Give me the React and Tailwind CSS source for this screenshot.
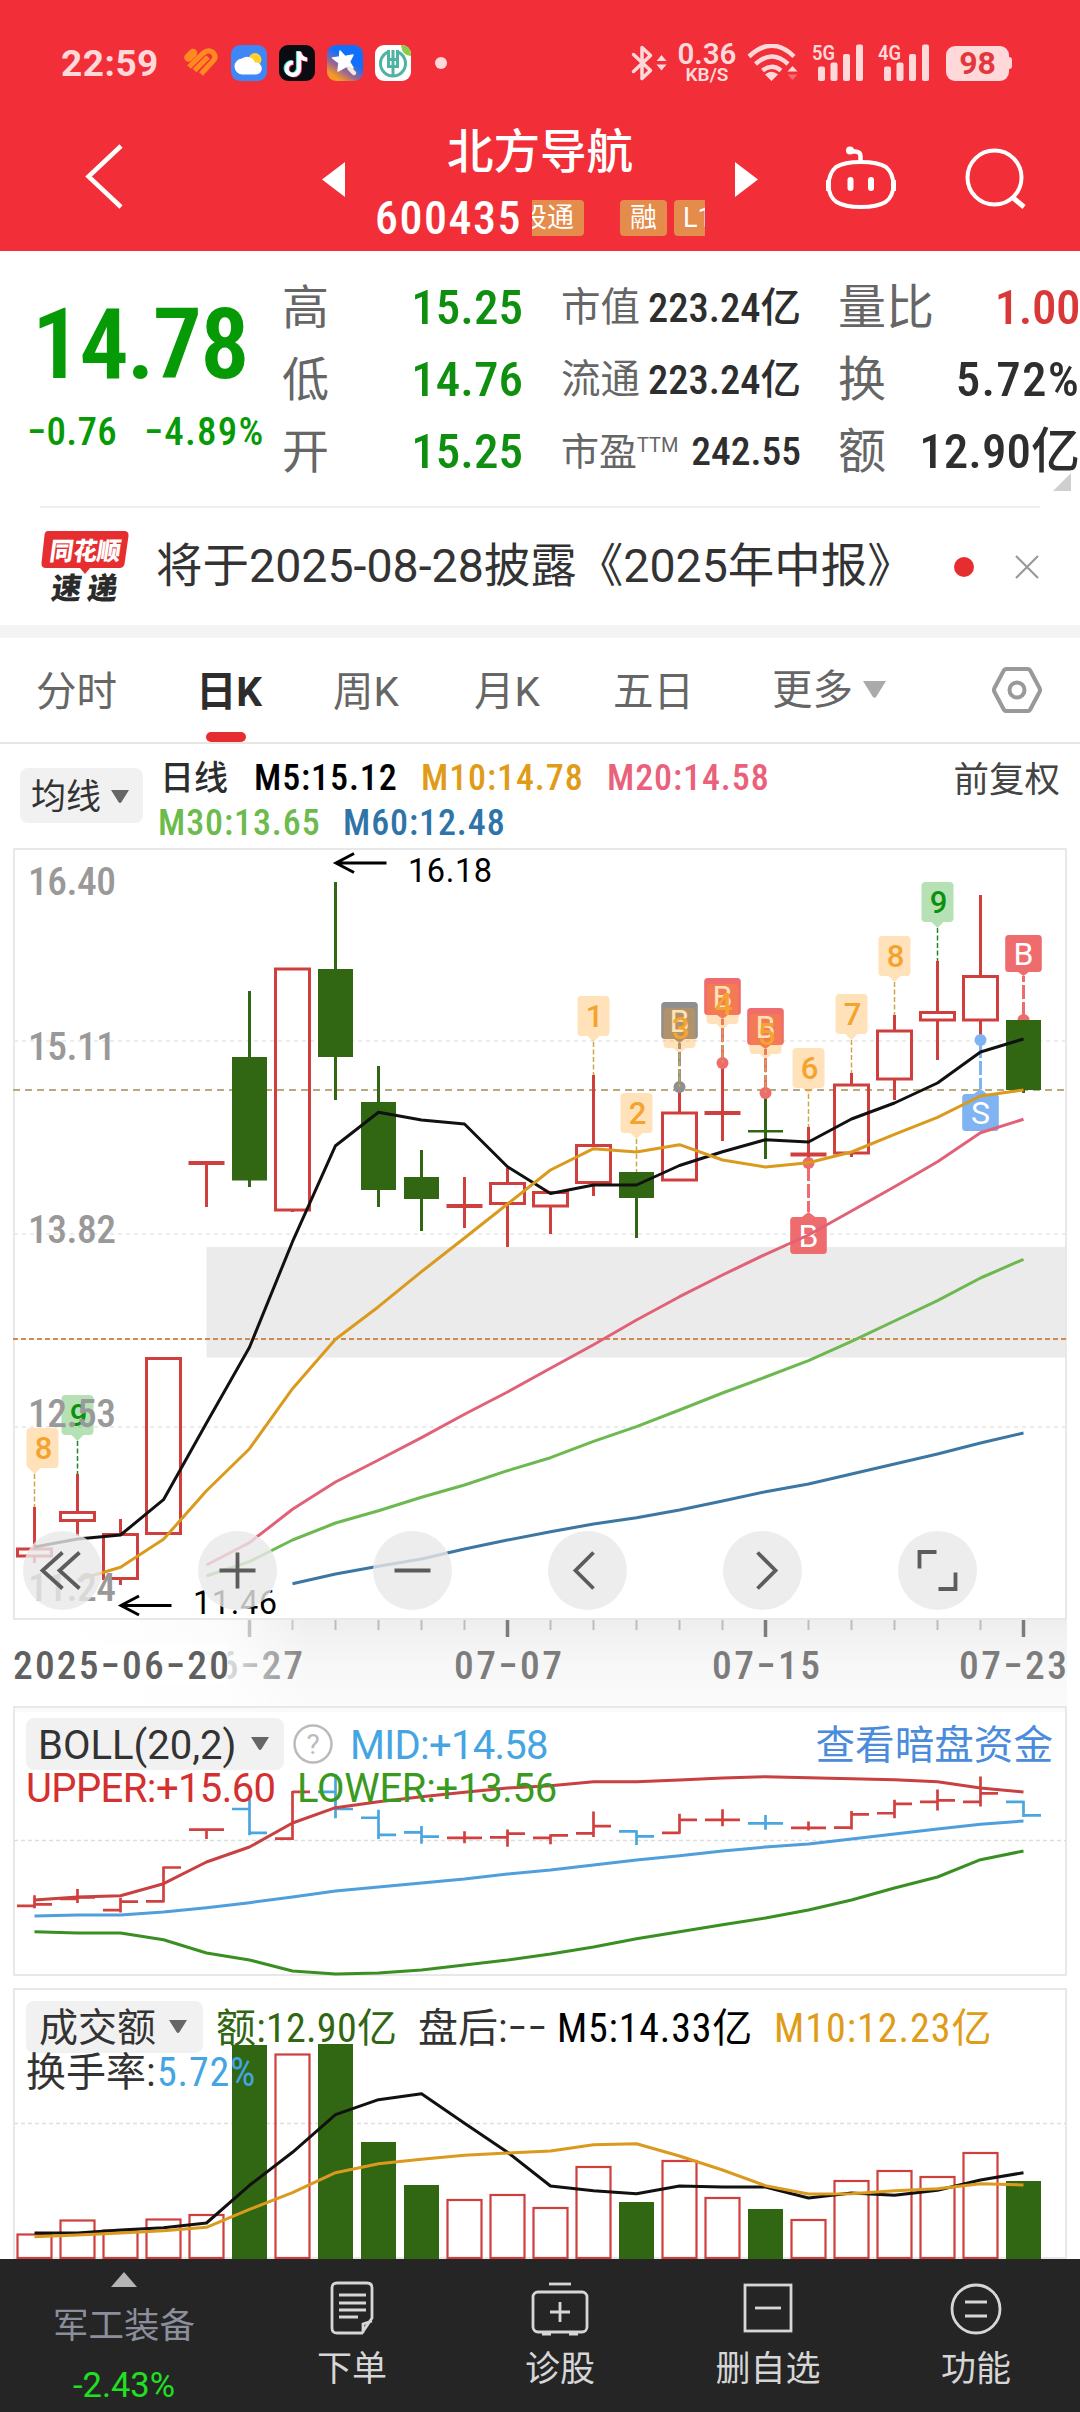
import React from 'react';

// x of the first candle and the distance between two candles
const X0 = 34.5;
const STEP = 43;
const RED = '#cf3f3e';
const GREEN = '#316613';
const xAt = (i) => X0 + i * STEP;

// [up, high, bodyTop, bodyBottom, low]
const candles = [
  [1, 1507, 1549, 1556, 1563],
  [1, 1474, 1512.5, 1520.5, 1536],
  [1, 1519, 1534.5, 1578.5, 1585],
  [1, 1358.5, 1358.5, 1533.5, 1533.5],
  [1, 1163, 1163, 1163, 1207],
  [0, 991, 1057, 1180.5, 1187],
  [1, 969, 969, 1210, 1212],
  [0, 882, 969, 1057, 1100],
  [0, 1066, 1102, 1190, 1207],
  [0, 1150, 1177, 1199, 1231],
  [1, 1177, 1206, 1206, 1228],
  [1, 1168, 1183.5, 1203.5, 1247],
  [1, 1192.5, 1192.5, 1206, 1234],
  [1, 1075, 1145.5, 1182.5, 1196],
  [0, 1172, 1172, 1198, 1238],
  [1, 1087, 1113, 1180, 1180],
  [1, 1063, 1113, 1113, 1141],
  [0, 1093, 1131, 1131, 1159],
  [1, 1127, 1154.5, 1154.5, 1163],
  [1, 1073, 1085, 1153, 1157],
  [1, 1015, 1031, 1079, 1100],
  [1, 961, 1012.5, 1020, 1060],
  [1, 895, 976.5, 1020, 1039],
  [0, 1020, 1020, 1090, 1093],
];

const MA = [
  { color: '#e16277', from: 4, ys: [1565, 1542.7, 1509.3, 1482, 1460, 1437.7, 1414.3, 1392, 1368.3, 1344.7, 1320, 1296.7, 1275, 1254.3, 1235, 1211, 1186.7, 1161.7, 1132.7, 1119.3] },
  { color: '#6db850', from: 4, ys: [1576, 1561.7, 1540, 1523, 1510.7, 1497.3, 1485, 1470.7, 1457.7, 1441.3, 1426.7, 1410, 1393, 1377, 1360.7, 1341.3, 1321, 1300.7, 1278, 1259.3] },
  { color: '#3c76a3', from: 6, ys: [1583.7, 1574, 1566.3, 1559, 1549, 1540, 1531.7, 1524, 1517.7, 1510, 1501, 1491.7, 1484, 1474, 1464, 1454, 1443, 1433] },
  { color: '#111111', from: 0, ys: [1547, 1539, 1535, 1499.7, 1423, 1347.3, 1241.7, 1145.7, 1112.3, 1120, 1124, 1166.7, 1193.5, 1185, 1185, 1165.5, 1151.7, 1139.7, 1142, 1119, 1103, 1083, 1052, 1039] },
  { color: '#da9a1d', from: 1, ys: [1580, 1567.3, 1539.3, 1490.7, 1448.7, 1388.7, 1339.3, 1306.7, 1271.7, 1238, 1204, 1170, 1148.7, 1152, 1144.7, 1160, 1167, 1162.7, 1152, 1134.3, 1117.3, 1096, 1090] },
];

const boll = [
  { color: '#c8403f', ys: [1900, 1897, 1895.7, 1883.7, 1862, 1847, 1823, 1807.7, 1801.7, 1796.7, 1792.3, 1788, 1785.7, 1781.7, 1781.7, 1780, 1778, 1776.7, 1777.7, 1778.7, 1779.7, 1781.7, 1788, 1792] },
  { color: '#4f9fdc', ys: [1916, 1915, 1915, 1912, 1907.7, 1902.7, 1897, 1891, 1887, 1883, 1879, 1874, 1870, 1865, 1860, 1855.7, 1851, 1847, 1844, 1839, 1834, 1829, 1824.3, 1821] },
  { color: '#3a8f22', ys: [1931.7, 1933, 1933, 1939.7, 1953, 1960, 1971, 1974, 1973, 1970, 1965, 1960, 1954, 1947, 1938.7, 1931.7, 1924.7, 1918, 1910, 1900, 1888, 1877, 1859.7, 1851] },
];

const volume = [
  [1, 2234], [1, 2220], [1, 2230], [1, 2219], [1, 2214.5], [0, 2045], [1, 2054], [0, 2044],
  [0, 2142], [0, 2185], [1, 2199.5], [1, 2194.5], [1, 2207.5], [1, 2166.5], [0, 2202], [1, 2160.5],
  [1, 2197.5], [0, 2209], [1, 2219.5], [1, 2180.5], [1, 2170.5], [1, 2176.5], [1, 2152.5], [0, 2181],
];

const volMA = [
  { color: '#111111', ys: [2233, 2233, 2230, 2227.7, 2223, 2185.3, 2152.3, 2114.7, 2099.7, 2093.7, 2123.3, 2152.3, 2186, 2190.7, 2193.7, 2186, 2187, 2187, 2198, 2193, 2195.3, 2190.3, 2180, 2172.7] },
  { color: '#da9a1d', ys: [2236.7, 2235, 2233, 2230.7, 2227.3, 2209.3, 2192.7, 2172.7, 2163.7, 2159.3, 2155.3, 2153, 2151, 2144.7, 2143.7, 2156, 2170, 2185.7, 2194, 2193.7, 2190.7, 2188.7, 2183.7, 2185] },
];

const pins = [
  [0, '8'], [1, '9'], [13, '1'], [14, '2'], [15, '3'], [16, '4'], [17, '5'], [18, '6'], [19, '7'], [20, '8'], [21, '9'],
];

function Line({ color, ys, from = 0 }) {
  return (
    <polyline
      points={ys.map((y, k) => `${xAt(from + k)},${y}`).join(' ')}
      fill="none"
      stroke={color}
      strokeWidth="3"
      strokeLinejoin="round"
    />
  );
}

function Candle({ i, d }) {
  const [up, high, top, bottom, low] = d;
  const x = xAt(i);
  if (!up) {
    return (
      <g fill={GREEN}>
        <rect x={x - 1.5} y={high} width="3" height={low - high} />
        <rect x={x - 17.5} y={top === bottom ? top - 1 : top} width="35" height={Math.max(bottom - top, 2.5)} />
      </g>
    );
  }
  if (top === bottom) {
    return (
      <g fill={RED}>
        <rect x={x - 1.5} y={high} width="3" height={low - high} />
        <rect x={x - 18} y={top - 2} width="36" height="4" />
      </g>
    );
  }
  return (
    <g stroke={RED} strokeWidth="3" fill="none">
      <path d={`M${x} ${high}V${top}M${x} ${bottom}V${low}`} />
      <rect x={x - 17} y={top} width="34" height={bottom - top} />
    </g>
  );
}

// numbered marker that hangs above a candle; the first one is pushed back inside the frame
function Pin({ i, label }) {
  const x = xAt(i);
  const bx = i === 0 ? x + 8 : x;
  const y = candles[i][1] - 79;
  const green = label === '9';
  return (
    <g>
      <path
        d={`M${bx - 12} ${y}h24q4 0 4 4v32q0 4 -4 4H${x + 6}l-6 6l-6 -6H${bx - 12}q-4 0 -4 -4v-32q0 -4 4 -4z`}
        fill={green ? '#0a9a0a' : '#ff9c1c'}
        opacity="0.3"
      />
      <path d={`M${x} ${y + 46}v33`} stroke={green ? '#1d8a1d' : '#c9a74a'} strokeWidth="1.5" strokeDasharray="5 2.5" />
      <text x={bx + 1} y={y + 31} textAnchor="middle" fontSize="31" fontWeight="500" fill={green ? '#0c910c' : '#f3a32e'}>{label}</text>
    </g>
  );
}

// buy / sell flag, dot sits on the candle end
function Flag({ i, label, color, down, y }) {
  const x = xAt(i);
  const s = down ? 1 : -1;
  const tip = down ? y + 49 : y - 44;
  const top = down ? tip + 5 : tip - 41;
  return (
    <g>
      <circle cx={x} cy={y} r="6" fill={color} />
      <path d={`M${x} ${y + s * 4}V${tip}`} stroke={color} strokeWidth="3" strokeDasharray="14 3" />
      <path d={`M${x - 8} ${tip + s * 6}L${x} ${tip}L${x + 8} ${tip + s * 6}z`} fill={color} />
      <rect x={x - 18.3} y={top} width="36.6" height="37" rx="3.5" fill={color} />
      <text x={x} y={top + 30} textAnchor="middle" fontSize="32" fill="#fff">{label}</text>
    </g>
  );
}

function PriceChart() {
  return (
    <svg width="1080" height="862" viewBox="0 844 1080 862" className="block font-['Roboto']">
      <defs>
        <linearGradient id="axis" x1="0" y1="0" x2="0" y2="1">
          <stop offset="0" stopColor="#eeeeee" />
          <stop offset="0.5" stopColor="#f7f7f7" />
          <stop offset="1" stopColor="#fbfbfb" />
        </linearGradient>
        <linearGradient id="fade" x1="0" y1="0" x2="1" y2="0">
          <stop offset="0" stopColor="#fff" />
          <stop offset="0.35" stopColor="#fff" stopOpacity="0.95" />
          <stop offset="0.72" stopColor="#fff" stopOpacity="0.75" />
          <stop offset="1" stopColor="#fff" stopOpacity="0" />
        </linearGradient>
      </defs>
      <rect x="13" y="1619" width="1054" height="87" fill="url(#axis)" />
      <rect x="206.5" y="1247" width="860" height="110.5" fill="#ebebeb" />
      <rect x="14" y="849" width="1052" height="770" fill="none" stroke="#e8e8e8" strokeWidth="2" />
      <path d="M14 1041H1066M14 1234H1066M14 1427H1066" stroke="#e6e6e6" strokeWidth="1.5" strokeDasharray="4 4" />
      <path d="M13 1090H1066" stroke="#b9aa7f" strokeWidth="2" strokeDasharray="7 5" />
      <path d="M13 1339H1066" stroke="#d08a50" strokeWidth="2" strokeDasharray="5 3" />

      <g fontSize="39.5" fontWeight="500" fill="#999" className="font-['Roboto_Condensed']">
        <text x="28" y="895" textLength="88">16.40</text>
        <text x="28" y="1060" textLength="88">15.11</text>
        <text x="28" y="1243" textLength="88">13.82</text>
      </g>

      {candles.map((d, i) => <Candle key={i} i={i} d={d} />)}

      <Flag i={15} label="B" color="#8f8f8f" y={1087} />
      <Flag i={16} label="B" color="#ee6c6e" y={1063} />
      <Flag i={17} label="B" color="#ee6c6e" y={1093} />
      <Flag i={18} label="B" color="#ee6c6e" y={1163} down />
      <Flag i={22} label="S" color="#7fb3f2" y={1040} down />
      <Flag i={23} label="B" color="#ee6c6e" y={1020} />
      {pins.map(([i, label]) => <Pin key={i} i={i} label={label} />)}
      <rect x={xAt(23) - 17.5} y="1020" width="35" height="70" fill={GREEN} />

      {MA.map((m) => <Line key={m.color} {...m} />)}

      <g fontSize="39.5" fontWeight="500" fill="#999" className="font-['Roboto_Condensed']">
        <text x="28" y="1427" textLength="88">12.53</text>
        <text x="28" y="1601" textLength="88">11.24</text>
      </g>

      <g stroke="#000" strokeWidth="3" fill="none">
        <path d="M386.5 863H336M354 853.5L336 863L354 872.5" />
        <path d="M171.5 1605.5H121M139 1596L121 1605.5L139 1615" />
      </g>
      <g fontSize="32.5" fill="#000">
        <text x="408" y="882" textLength="84">16.18</text>
        <text x="193" y="1613.5" textLength="84">11.46</text>
      </g>

      {/* date axis */}
      {candles.map((_, i) => {
        if (i < 5) return null;
        const major = (i - 5) % 6 === 0;
        return (
          <path
            key={i}
            d={`M${xAt(i)} 1620V${major ? 1637 : 1630}`}
            stroke={major ? '#7c7c7c' : '#bdbdbd'}
            strokeWidth={major ? 3.5 : 2}
          />
        );
      })}
      <g fontSize="39.5" fontWeight="500" fill="#7c7c7c" className="font-['Roboto_Condensed']">
        <text x="197" y="1679" textLength="106">06−27</text>
        <text x="454" y="1679" textLength="108">07−07</text>
        <text x="712" y="1679" textLength="108">07−15</text>
        <text x="959" y="1679" textLength="108">07−23</text>
      </g>
      <rect x="13" y="1620" width="297" height="86" fill="url(#fade)" />
      <rect x="13" y="1645" width="215" height="40" fill="#fff" opacity="0.7" />
      <text x="13" y="1679" fontSize="39.5" fontWeight="500" fill="#606060" textLength="216" className="font-['Roboto_Condensed']">2025−06−20</text>
    </svg>
  );
}

const toolButtons = [
  'M17 -18L-3 0L17 18M0 -18L-20 0L0 18',
  'M-18 0H18M0 -18V18',
  'M-18 0H18',
  'M6 -18L-12 0L6 18',
  'M-5 -18L13 0L-5 18',
  'M-18 -2V-18.5H-1M18 2V18.5H1',
];

const bollY = (y) => 1809 + (y - 1057) * 0.194;

function BollChart() {
  return (
    <svg width="1080" height="278" viewBox="0 1706 1080 278" className="block">
      <rect x="14" y="1706" width="1052" height="6" fill="#fafafa" />
      <rect x="14" y="1707" width="1052" height="268" fill="none" stroke="#e8e8e8" strokeWidth="2" />
      <path d="M14 1840.5H1066" stroke="#ddd" strokeWidth="1.5" strokeDasharray="4 3" />
      {candles.map(([up, high, top, bottom, low], i) => {
        const x = xAt(i);
        const open = bollY(up ? bottom : top);
        const close = bollY(up ? top : bottom);
        return (
          <path
            key={i}
            d={`M${x} ${bollY(high) - 1}V${bollY(low) + 1}M${x - 17.5} ${open}H${x}M${x} ${close}H${x + 17.5}`}
            stroke={up ? '#d0403f' : '#4aa6de'}
            strokeWidth="2.7"
          />
        );
      })}
      {boll.map((b) => <Line key={b.color} {...b} />)}
    </svg>
  );
}

function VolumeChart() {
  return (
    <svg width="1080" height="275" viewBox="0 1984 1080 275" className="block">
      <path d="M14 2262V1989H1066V2262M14 2258H1066" fill="none" stroke="#e8e8e8" strokeWidth="2" />
      <path d="M14 2123.5H1066" stroke="#ddd" strokeWidth="1.5" strokeDasharray="4 3" />
      {volume.map(([up, y], i) =>
        up ? (
          <rect key={i} x={xAt(i) - 17} y={y + 0.5} width="34" height={2257.5 - y} fill="none" stroke={RED} strokeWidth="2.2" />
        ) : (
          <rect key={i} x={xAt(i) - 17.5} y={y} width="35" height={2259 - y} fill={GREEN} />
        )
      )}
      {volMA.map((m) => <Line key={m.color} {...m} />)}
    </svg>
  );
}

function Caret({ className }) {
  return (
    <svg width="18" height="14" viewBox="0 0 18 14" className={className}>
      <path d="M0 0h18l-7.5 12q-1.5 2 -3 0z" fill="currentColor" />
    </svg>
  );
}

function Signal({ label }) {
  return (
    <svg width="52" height="38" viewBox="0 0 52 38" fill="#ffd9da" className="overflow-visible">
      <text x="0" y="15.5" fontSize="21" fontWeight="600" textLength="23" lengthAdjust="spacingAndGlyphs">{label}</text>
      <rect x="6" y="22.5" width="7" height="14.5" rx="2" />
      <rect x="18.5" y="18.5" width="7" height="18.5" rx="2" />
      <rect x="31" y="10" width="7" height="27" rx="2" />
      <rect x="44" y="0.5" width="7" height="36.5" rx="2" />
    </svg>
  );
}

function StatusBar() {
  return (
    <div className="flex h-[126px] items-center pl-[61px] text-[#ffd9da]">
      <div className="w-[123px] text-[37px] font-bold leading-none tracking-[0.5px]">22:59</div>
      <svg width="34" height="30" viewBox="0 0 34 30" className="mr-[13px]" fill="none" stroke="#ff8a1f" strokeWidth="5.2">
        <path d="M4.500 9.500L9 5" strokeWidth="8.500" strokeLinecap="round" />
        <path d="M5 19L19.500 5Q24 1 29 4.500Q33 9 29 13L17 26M10.500 22.500L24 9" />
      </svg>
      <svg width="36" height="36" viewBox="0 0 36 36" className="mr-3">
        <rect width="36" height="36" rx="9" fill="#3f86f7" />
        <circle cx="24" cy="14.5" r="6.5" fill="#ffd02e" />
        <path d="M12 29.5a8 8 0 0 1 -1 -16a8.5 8.5 0 0 1 13 4a6 6 0 0 1 1.5 12z" fill="#fff" />
      </svg>
      <svg width="36" height="36" viewBox="0 0 36 36" className="mr-3" fill="none" strokeWidth="4.2">
        <rect width="36" height="36" rx="9" fill="#0b0b12" />
        <path d="M19 6v17a6.2 6.2 0 1 1 -6 -6M19 7q1.5 6.5 8 7" stroke="#27e5e0" />
        <path d="M21 7v17a6.2 6.2 0 1 1 -6 -6M21 8q1.5 6.5 8 7" stroke="#f6305a" />
        <path d="M20 6.5v17a6.2 6.2 0 1 1 -6 -6M20 7.5q1.5 6.5 8 7" stroke="#fff" />
      </svg>
      <svg width="36" height="36" viewBox="0 0 36 36" className="mr-3">
        <defs>
          <linearGradient id="star" x1="0.8" y1="0.1" x2="0.2" y2="1">
            <stop offset="0.35" stopColor="#1170fb" />
            <stop offset="0.65" stopColor="#a0658f" />
            <stop offset="0.9" stopColor="#f59b23" />
          </linearGradient>
        </defs>
        <rect width="36" height="36" rx="9" fill="url(#star)" />
        <path d="M13 6l5 5.5l8 -1.5l-3.500 7l3.500 6l-7 -1.500l-8 4.500l1 -8l-6.500 -5l7 -1z" fill="#fff" stroke="#fff" strokeWidth="1.5" strokeLinejoin="round" />
        <path d="M22.5 23.5l4.5 4.5" stroke="#f4ead9" strokeWidth="4.5" strokeLinecap="round" />
      </svg>
      <svg width="36" height="36" viewBox="0 0 36 36" className="mr-6">
        <rect width="36" height="36" rx="9" fill="#fff" />
        <path d="M26 0h1a9 9 0 0 1 9 9v2q-9 0 -10 -11z" fill="#8ccb45" />
        <circle cx="18" cy="18.5" r="12.5" fill="none" stroke="#4fb3a4" strokeWidth="3" />
        <path d="M18 3v9" stroke="#fff" strokeWidth="7" />
        <path d="M13.5 5v16.5h9V5M18 5v26M13.5 14.5h9" fill="none" stroke="#4fb3a4" strokeWidth="3" />
      </svg>
      <div className="size-3 rounded-full bg-[#ffd9da]" />

      <svg width="37" height="38" viewBox="0 0 37 38" className="ml-[184px] mr-[9px]">
        <path d="M2.5 10.5L19.5 26.5L11 34.5V3.5L19.5 11.5L2.5 27.5" fill="none" stroke="#ffd9da" strokeWidth="3.5" strokeLinejoin="round" strokeLinecap="round" />
        <path d="M25.5 17l5 -6l5 6zM25.5 20.5h10l-5 6z" fill="#ffd9da" />
      </svg>
      <div className="flex w-[60px] flex-col items-center leading-none">
        <span className="text-[29.5px] font-semibold leading-[22px]">0.36</span>
        <span className="text-[19px] font-semibold leading-[19px]">KB/S</span>
      </div>
      <svg width="51" height="38" viewBox="0 0 51 38" className="ml-[10px] mr-[14px]">
        <path d="M2 12.5Q25 -9 47 12.5M8.5 20Q25 5 41 20M15.5 26.5Q25 19 34 26.5" fill="none" stroke="#ffd9da" strokeWidth="4.5" />
        <path d="M24.5 37l-6.5 -6.5q6.5 -5.5 13 0z" fill="#ffd9da" />
        <path d="M40.5 27.5l5 -5.5l5 5.5z" fill="#ffd9da" />
        <path d="M40.5 30.5h10l-5 5.5z" fill="#f66a6f" />
      </svg>
      <Signal label="5G" />
      <div className="w-[14px]" />
      <Signal label="4G" />
      <div className="ml-[16px] flex items-center">
        <div className="flex h-[35px] w-[63px] items-center justify-center rounded-[9px] bg-[#ffd9da] text-[32px] font-bold leading-none text-[#e2373c]">98</div>
        <div className="h-3 w-[3px] rounded-r-sm bg-[#ffd9da]" />
      </div>
    </div>
  );
}

function TitleBar() {
  return (
    <div className="flex h-[125px] text-white">
      <svg width="322" height="125" viewBox="0 0 322 125" fill="none">
        <path d="M121 20L88.500 50.500L121 81" stroke="#fff" strokeWidth="4.5" />
      </svg>
      <svg width="23" height="125" viewBox="0 0 23 125"><path d="M0 53.5L23 36V71z" fill="#fff" /></svg>
      <div className="flex w-[390px] flex-col items-center">
        <div className="h-[60px] pt-[3px] text-[46.5px] font-medium leading-[46px]">北方导航</div>
        <div className="flex h-[58px] w-[330px] items-center pt-[5px]">
          <span className="w-[157px] font-['Roboto_Condensed'] text-[46px] font-medium leading-none tracking-[1.5px]">600435</span>
          <div className="flex w-[173px] items-center overflow-hidden whitespace-nowrap text-[27px] leading-9">
            <span className="-ml-3 h-9 w-[64px] shrink-0 rounded bg-[#e38c4b]">股通</span>
            <span className="ml-9 h-9 w-[47px] shrink-0 rounded bg-[#e38c4b] text-center">融</span>
            <span className="ml-[7px] h-9 w-[47px] shrink-0 rounded bg-[#e38c4b] pl-[9px]">L1</span>
          </div>
        </div>
      </div>
      <svg width="23" height="125" viewBox="0 0 23 125"><path d="M23 53.5L0 36V71z" fill="#fff" /></svg>
      <svg width="322" height="125" viewBox="758 126 322 125" fill="none" stroke="#fff" strokeWidth="4">
        <path d="M861 162q17 0 25 5q7 6 7.5 18q-0.5 12 -8 17q-8 5 -24.5 5t-24.5 -5q-7.5 -5 -8 -17q0.5 -12 7.5 -18q8 -5 25 -5z" />
        <path d="M828.5 180v11M893.5 180v11" strokeWidth="5" />
        <path d="M860.5 162V156q0 -4 -5 -4.5h-4" strokeWidth="4.5" />
        <circle cx="850" cy="150.5" r="4" fill="#fff" stroke="none" />
        <path d="M850.5 180v8M871 180v8" strokeWidth="6" strokeLinecap="round" />
        <circle cx="994.5" cy="177.5" r="27" />
        <path d="M1012 197L1024 207" strokeWidth="5" />
      </svg>
    </div>
  );
}

function Cell({ label, sup, value, labelClass, valueClass }) {
  return (
    <div className="flex h-[72px] items-center justify-between">
      <span className={`text-[#666] ${labelClass}`}>
        {label}
        {sup && <sup className="relative top-[-13px] align-baseline text-[20px] leading-none">{sup}</sup>}
      </span>
      <span className={`whitespace-nowrap font-medium font-['Roboto_Condensed','Noto_Sans_CJK_SC',sans-serif] ${valueClass}`}>{value}</span>
    </div>
  );
}

function Quote() {
  return (
    <div className="relative flex h-[255px] pt-[21px] text-[#2e2e2e]">
      <div className="w-[282px] font-['Roboto_Condensed'] font-medium text-[#079a07]">
        <div className="mt-[24px] h-[111px] pl-[32px] text-[98px] font-semibold leading-[98px] tracking-[-1.9px]">14.78</div>
        <div className="flex pl-[27px] text-[39px] leading-[50px] tracking-[0.3px]">
          <span className="w-[117px]">−0.76</span>
          <span className="tracking-[1.2px]">−4.89%</span>
        </div>
      </div>
      <div className="w-[241px]">
        {[['高', '15.25'], ['低', '14.76'], ['开', '15.25']].map(([label, value]) => (
          <Cell key={label} label={label} value={value} labelClass="text-[47px]" valueClass="text-[49px] text-[#0f8f0f]" />
        ))}
      </div>
      <div className="ml-[38px] w-[240px]">
        <Cell label="市值" value="223.24亿" labelClass="text-[39.5px]" valueClass="text-[40.5px]" />
        <Cell label="流通" value="223.24亿" labelClass="text-[39.5px]" valueClass="text-[40.5px]" />
        <Cell label="市盈" sup="TTM" value="242.55" labelClass="text-[38px]" valueClass="text-[39.5px]" />
      </div>
      <div className="ml-[37px] w-[242px]">
        <Cell label="量比" value="1.00" labelClass="text-[48px]" valueClass="text-[49px] text-[#d93838] tracking-[-0.5px]" />
        <Cell label="换" value="5.72%" labelClass="text-[48px]" valueClass="text-[49px] tracking-[1.2px]" />
        <Cell label="额" value="12.90亿" labelClass="text-[48px]" valueClass="text-[49px]" />
      </div>
      <svg width="18" height="18" className="absolute right-[9px] top-[222px]"><path d="M18 0V18H0z" fill="#cfcfcf" /></svg>
    </div>
  );
}

function News() {
  return (
    <div className="mx-10 flex h-[119px] items-center border-t-2 border-[#eee] text-[#333]">
      <svg width="90" height="74" viewBox="0 0 90 74" className="font-['Noto_Sans_CJK_SC',sans-serif]">
        <path d="M8 1H84q5 0 4.5 5l-4 28q-1 4 -5 4H50l-5 6l-5 -6H6q-5 0 -4.5 -5l3 -28q0.5 -4 3.500 -4z" fill="#e62e30" />
        <g transform="skewX(-8)">
          <text x="13" y="30" fontSize="25" fontWeight="900" fill="#fff" textLength="71" lengthAdjust="spacingAndGlyphs">同花顺</text>
          <text x="20" y="69" fontSize="30" fontWeight="900" fill="#2b2b2b" textLength="66">速递</text>
        </g>
      </svg>
      <div className="ml-[26px] w-[798px] whitespace-nowrap text-[46.5px] leading-none">将于2025-08-28披露《2025年中报》</div>
      <div className="size-5 shrink-0 rounded-full bg-[#e62e30]" />
      <svg width="24" height="24" viewBox="0 0 24 24" className="ml-[41px] shrink-0">
        <path d="M1 1L23 23M23 1L1 23" stroke="#999" strokeWidth="2.2" />
      </svg>
    </div>
  );
}

function Tabs() {
  return (
    <div className="flex h-[106px] border-b-2 border-[#e6e6e6] text-[40.5px] leading-[109px] text-[#666]">
      <div className="w-[120px] pl-[36px]">分时</div>
      <div className="relative w-[218px] text-center font-bold text-[#2d2d2d]">
        日K
        <span className="absolute bottom-0 left-[86px] h-[10px] w-10 rounded-full bg-[#e62e30]" />
      </div>
      <div className="-ml-[5px] w-[60px] whitespace-nowrap">周K</div>
      <div className="ml-[81px] w-[62px] whitespace-nowrap">月K</div>
      <div className="ml-[77px] whitespace-nowrap">五日</div>
      <div className="ml-[78px] flex items-center whitespace-nowrap">
        更多
        <Caret className="ml-[10px] h-[18px] w-[23px] text-[#aaa]" />
      </div>
      <svg width="50" height="48" viewBox="0 0 50 48" fill="none" stroke="#999" className="ml-[106px] mt-[28px]">
        <path d="M14.5 3h21q2 0 3 2l9 17q1 2 0 4l-9 17q-1 2 -3 2h-21q-2 0 -3 -2l-9 -17q-1 -2 0 -4l9 -17q1 -2 3 -2z" strokeWidth="4" />
        <circle cx="25" cy="24" r="7.5" strokeWidth="4" />
      </svg>
    </div>
  );
}

function MaLegend() {
  return (
    <div className="flex h-[100px] pl-5">
      <div className="mt-6 flex h-[55px] w-[123px] items-center rounded-lg bg-[#f1f1f1] pl-[11px] pt-[3px] text-[35px] leading-none text-[#333]">
        均线
        <Caret className="ml-[10px] text-[#666]" />
      </div>
      <div className="ml-[15px] mt-[12px] w-[700px] font-['Roboto_Condensed','Noto_Sans_CJK_SC',sans-serif] text-[36px] font-medium leading-[44.5px] tracking-[0.9px]">
        <div className="flex whitespace-nowrap">
          <span className="w-[96px] pl-[2px] text-[34px] tracking-normal text-[#2d2d2d]">日线</span>
          <span className="w-[167px] text-black">M5:15.12</span>
          <span className="w-[186px] text-[#e09c19]">M10:14.78</span>
          <span className="text-[#e9617a]">M20:14.58</span>
        </div>
        <div className="flex whitespace-nowrap">
          <span className="w-[185px] text-[#6dbb4c]">M30:13.65</span>
          <span className="text-[#2f74a8]">M60:12.48</span>
        </div>
      </div>
      <div className="ml-auto mr-[20px] mt-[14px] text-[35.5px] leading-[44px] text-[#444]">前复权</div>
    </div>
  );
}

const navItems = [
  { label: '下单', icon: <><path d="M8 2H38q5 0 5 5V37L33 52H8q-5 0 -5 -5V7q0 -5 5 -5zM43 40L34 43V52" /><path d="M10 14H37M10 22H37M10 29H37M10 36H29" /></> },
  { label: '诊股', icon: <><path d="M12 3H34" /><rect x="-4" y="11" width="54" height="40" rx="5" /><path d="M23 21V41M13 31H33M5 53H14M32 53H41" /></> },
  { label: '删自选', icon: <><rect x="0" y="4" width="46" height="46" /><path d="M10 27H36" /></> },
  { label: '功能', icon: <><circle cx="23" cy="28" r="24" /><path d="M12 21H34M12 35H34" /></> },
];

function BottomNav() {
  return (
    <div className="flex h-[153px] bg-[#252525]">
      <div className="flex w-[248px] flex-col items-center">
        <svg width="26" height="15" className="mt-[13px]"><path d="M13 0L26 15H0z" fill="#b5b5b5" /></svg>
        <div className="mt-[16px] text-[35.5px] leading-[46px] text-[#8b8e9b]">军工装备</div>
        <div className="mt-[16px] text-[34.5px] leading-[40px] text-[#21e021]">-2.43%</div>
      </div>
      {navItems.map((item) => (
        <div key={item.label} className="flex w-[208px] flex-col items-center">
          <svg width="60" height="56" viewBox="-7 0 60 56" fill="none" stroke="#d6d6d6" strokeWidth="2.8" className="mt-[22px]">
            {item.icon}
          </svg>
          <div className="mt-[10px] text-[35px] leading-[46px] text-[#d6d6d6]">{item.label}</div>
        </div>
      ))}
    </div>
  );
}

export default function App() {
  return (
    <div className="h-[2412px] w-[1080px] overflow-hidden bg-white font-['Roboto','Noto_Sans_CJK_SC',sans-serif]">
      {/* Header */}
      <div className="bg-[#f22f38]">
        <StatusBar />
        <TitleBar />
      </div>

      <Quote />
      <News />
      <div className="h-[13px] bg-[#f4f4f4]" />
      <Tabs />
      <MaLegend />

      {/* Candles with floating tool buttons */}
      <div className="relative">
        <PriceChart />
        <div className="absolute left-[23px] top-[687px] flex gap-24">
          {toolButtons.map((d) => (
            <svg key={d} width="79" height="79" viewBox="-39.5 -39.5 79 79" fill="none">
              <circle r="39.5" fill="#e8e8e8" opacity="0.8" />
              <path d={d} stroke="#5c5c5c" strokeWidth="3.8" />
            </svg>
          ))}
        </div>
      </div>

      {/* BOLL */}
      <div className="relative text-[40px]">
        <BollChart />
        <div className="absolute left-[26px] right-[27px] top-[12px]">
          <div className="flex h-[52px] items-center whitespace-nowrap leading-none">
            <div className="flex h-[52px] w-[258px] items-center rounded-lg bg-[#f1f1f1] pl-[12px] text-[#333]">
              <span className="w-[213px] pt-[3px]">BOLL(20,2)</span>
              <Caret className="text-[#666]" />
            </div>
            <svg width="40" height="40" viewBox="0 0 40 40" className="ml-[9px]">
              <circle cx="20" cy="20" r="18.5" fill="none" stroke="#bbb" strokeWidth="2.5" />
              <text x="20" y="30" textAnchor="middle" fontSize="28" fill="#bbb">?</text>
            </svg>
            <span className="ml-[17px] pt-[3px] tracking-[-0.7px] text-[#45a5e2]">MID:+14.58</span>
            <span className="ml-auto pt-[3px] text-[39.6px] text-[#4a8bdb]">查看暗盘资金</span>
          </div>
          <div className="flex leading-[38px]">
            <span className="w-[271px] tracking-[-0.6px] text-[#d3302f]">UPPER:+15.60</span>
            <span className="tracking-[-0.3px] text-[#3a9a20]">LOWER:+13.56</span>
          </div>
        </div>
      </div>

      {/* Turnover */}
      <div className="relative font-['Roboto_Condensed','Noto_Sans_CJK_SC',sans-serif] text-[40px]">
        <VolumeChart />
        <div className="absolute left-[26px] top-[17px]">
          <div className="flex h-[52px] items-center whitespace-nowrap leading-none">
            <div className="flex h-[52px] w-[177px] items-center rounded-lg bg-[#f1f1f1] pl-[13px] text-[39px] text-[#333]">
              <span className="w-[130px] pt-[3px]">成交额</span>
              <Caret className="text-[#666]" />
            </div>
            <span className="ml-[13px] w-[202px] pt-[3px] tracking-[0.3px] text-[#316613]">额:12.90亿</span>
            <span className="w-[139px] pt-[3px] text-[#333]">盘后:−−</span>
            <span className="w-[217px] pt-[3px] tracking-[0.8px] text-black">M5:14.33亿</span>
            <span className="pt-[3px] tracking-[1px] text-[#e09c19]">M10:12.23亿</span>
          </div>
          <div className="flex leading-[40px]">
            <span className="w-[131px] whitespace-nowrap text-[#333]">换手率:</span>
            <span className="tracking-[0.8px] text-[#45a5e2]">5.72%</span>
          </div>
        </div>
      </div>

      <BottomNav />
    </div>
  );
}
